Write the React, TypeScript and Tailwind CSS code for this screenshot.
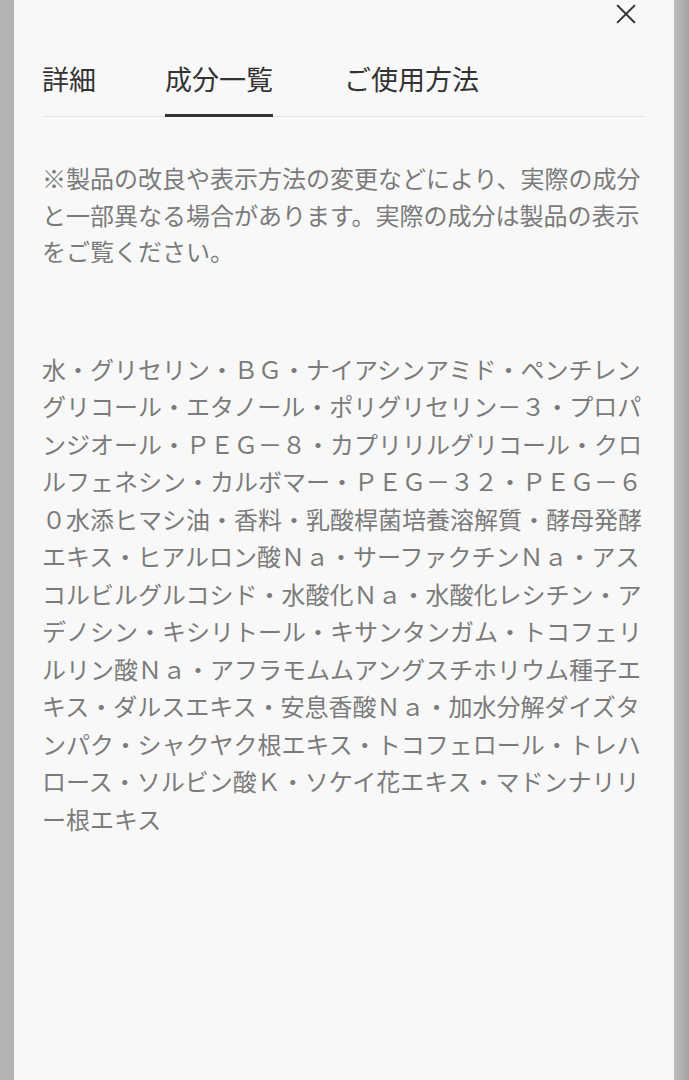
import React from 'react';

const notice = [
    '※製品の改良や表示方法の変更などにより、実際の成分',
    'と一部異なる場合があります。実際の成分は製品の表示',
    'をご覧ください。',
];

const ingredients = [
    '水・グリセリン・ＢＧ・ナイアシンアミド・ペンチレン',
    'グリコール・エタノール・ポリグリセリン－３・プロパ',
    'ンジオール・ＰＥＧ－８・カプリリルグリコール・クロ',
    'ルフェネシン・カルボマー・ＰＥＧ－３２・ＰＥＧ－６',
    '０水添ヒマシ油・香料・乳酸桿菌培養溶解質・酵母発酵',
    'エキス・ヒアルロン酸Ｎａ・サーファクチンＮａ・アス',
    'コルビルグルコシド・水酸化Ｎａ・水酸化レシチン・ア',
    'デノシン・キシリトール・キサンタンガム・トコフェリ',
    'ルリン酸Ｎａ・アフラモムムアングスチホリウム種子エ',
    'キス・ダルスエキス・安息香酸Ｎａ・加水分解ダイズタ',
    'ンパク・シャクヤク根エキス・トコフェロール・トレハ',
    'ロース・ソルビン酸Ｋ・ソケイ花エキス・マドンナリリ',
    'ー根エキス',
];

const tabs = [
    { label: '詳細', active: false, ml: '' },
    { label: '成分一覧', active: true, ml: 'ml-[69px]' },
    { label: 'ご使用方法', active: false, ml: 'ml-[71px]' },
];

function CloseIcon() {
    return (
        <svg viewBox="0 0 24 24" className="w-[22px] h-[22px]" fill="none" stroke="#333333" strokeWidth={2.1} strokeLinecap="square">
            <path d="M3 3L21 21M21 3L3 21" />
        </svg>
    );
}

function TextBlock({ lines, className = '' }: { lines: string[]; className?: string }) {
    return (
        <div className={`text-[24px] text-[#7b7b7b] ${className}`}>
            {lines.map((line, i) => (
                <div key={i} className="whitespace-nowrap">
                    {line}
                </div>
            ))}
        </div>
    );
}

export default function App() {
    return (
        <div
            className="flex h-[1080px] w-[689px] overflow-hidden bg-[#b5b5b5]"
            style={{ fontFamily: '"Noto Sans CJK JP", "Noto Sans", sans-serif' }}
        >
            {/* left backdrop */}
            <div className="w-[14px] shrink-0 bg-[#b3b3b3]" />

            {/* sheet */}
            <div className="relative w-[660px] shrink-0 bg-[#f8f8f8] px-[28px] pt-[64px]">
                <button className="absolute top-[3px] right-[37px]" aria-label="close">
                    <CloseIcon />
                </button>

                {/* Tabs */}
                <div className="flex border-b border-[#e4e4e4]">
                    {tabs.map((t) => (
                        <div key={t.label} className={`relative pb-[22px] ${t.ml}`}>
                            <span className="block text-[27px] leading-[30px] text-[#333333]">{t.label}</span>
                            {t.active && <span className="absolute left-0 right-0 bottom-[-1px] h-[3px] bg-[#333333]" />}
                        </div>
                    ))}
                </div>

                <TextBlock lines={notice} className="mt-[43px] leading-[36.5px]" />
                <TextBlock lines={ingredients} className="mt-[80px] leading-[37.5px]" />
            </div>

            {/* right backdrop */}
            <div className="w-[15px] shrink-0 bg-linear-to-r from-[#bdbdbd] to-[#a2a2a2]" />
        </div>
    );
}
